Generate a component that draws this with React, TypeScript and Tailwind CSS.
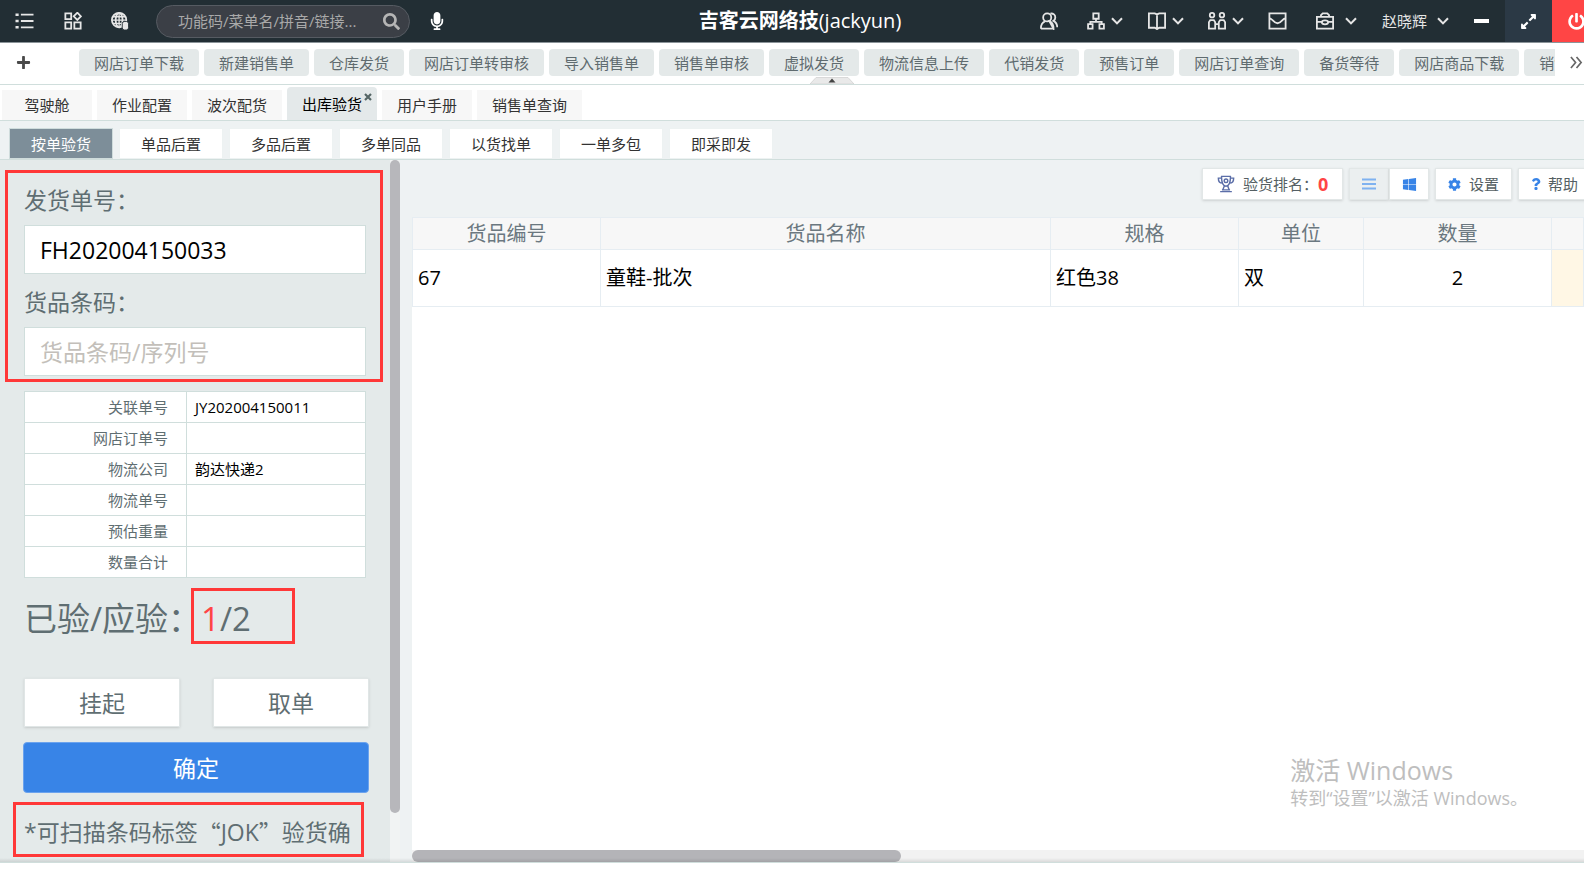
import type { ReactNode } from 'react'
import { FaSearch, FaMicrophone, FaWindows, FaCog, FaQuestion, FaPowerOff, FaPlus, FaExpandAlt } from 'react-icons/fa'

const SHORTCUTS = [
  '网店订单下载',
  '新建销售单',
  '仓库发货',
  '网店订单转审核',
  '导入销售单',
  '销售单审核',
  '虚拟发货',
  '物流信息上传',
  '代销发货',
  '预售订单',
  '网店订单查询',
  '备货等待',
  '网店商品下载',
  '销售单查询',
]

const PAGES = ['驾驶舱', '作业配置', '波次配货', '出库验货', '用户手册', '销售单查询']
const ACTIVE_PAGE = '出库验货'

const MODES = ['按单验货', '单品后置', '多品后置', '多单同品', '以货找单', '一单多包', '即采即发']
const ACTIVE_MODE = '按单验货'

const ORDER_INFO = [
  { label: '关联单号', value: 'JY202004150011' },
  { label: '网店订单号', value: '' },
  { label: '物流公司', value: '韵达快递2' },
  { label: '物流单号', value: '' },
  { label: '预估重量', value: '' },
  { label: '数量合计', value: '' },
]

function Icon({ children, className = 'w-[18px] h-[18px]' }: { children: ReactNode; className?: string }) {
  return (
    <svg
      viewBox="0 0 20 20"
      className={`${className} shrink-0`}
      fill="none"
      stroke="currentColor"
      strokeWidth="2"
      aria-hidden="true"
    >
      {children}
    </svg>
  )
}

function Chevron() {
  return (
    <svg viewBox="0 0 12 8" className="w-3 h-2 shrink-0" fill="none" stroke="currentColor" strokeWidth="2" aria-hidden="true">
      <path d="M1 1.200 6 6.400 11 1.200" />
    </svg>
  )
}

function Header() {
  return (
    <header className="-mr-4 h-[43px] shrink-0 grid grid-cols-[1fr_auto_1fr] items-center bg-[#222e34] border-b border-[#8b9499] text-[#e6e6e6]">
      <div className="flex items-center pl-[15px]">
        <button aria-label="菜单" className="mr-[30px]">
          <Icon className="w-[19px] h-[18px]">
            <path d="M0 3h3.500M0 10h3.500M0 17h3.500" strokeWidth="2.800" />
            <path d="M6 3h14M6 10h14M6 17h14" />
          </Icon>
        </button>
        <button aria-label="应用" className="mr-[29px]">
          <Icon>
            <path d="M1.500 1.500h6.500v6.500h-6.500zM1.500 11.500h6.500v7h-6.500zM11.500 11.500h7v7h-7z" />
            <path d="m14.800.800 4 4-4 4-4-4z" />
          </Icon>
        </button>
        <button aria-label="网络" className="mr-[27px]">
          <Icon>
            <circle cx="9" cy="9" r="8" />
            <ellipse cx="9" cy="9" rx="3.800" ry="8" />
            <path d="M9 1v16M1 9h16M2 5.300h14M2 12.700h10" strokeWidth="1.500" />
            <rect x="12.500" y="10.500" width="7" height="9.500" rx="2.500" fill="currentColor" stroke="#222e34" strokeWidth="1" />
          </Icon>
        </button>
        <div className="flex items-center w-[254px] h-[33px] pl-[21px] pr-[9px] rounded-full bg-[#3b3f46] border border-[#565b62]">
          <input
            type="text"
            aria-label="搜索"
            placeholder="功能码/菜单名/拼音/链接..."
            className="flex-1 min-w-0 bg-transparent outline-none text-[15px] leading-5 placeholder:text-[#a9a9a9]"
          />
          <FaSearch className="w-[17px] h-[17px] text-[#b5b5b5]" />
        </div>
        <button aria-label="语音" className="ml-[18px]">
          <FaMicrophone className="w-[18px] h-[18px] text-white" />
        </button>
      </div>

      <h1 className="text-[20px] leading-7 text-white">
        <span className="font-bold">吉客云网络技</span>(jackyun)
      </h1>

      <div className="flex items-center justify-end h-full">
        <button aria-label="联系人" className="mr-[29px]">
          <Icon>
            <circle cx="8" cy="6" r="4.500" />
            <path d="M1 18.500c0-4.500 2-7 4.500-8M10.500 10.500c3 1 4.500 3.500 4.500 8zM1 18.500h14" />
            <path d="M11.500 1.700c3.500-.4 5.500 1.600 5.500 4.300 0 1.700-.8 3-2 3.800 2.500 1.200 4 3.700 4.200 7.200" />
          </Icon>
        </button>
        <button aria-label="组织" className="flex items-center gap-[6px] mr-[25px]">
          <Icon>
            <path d="M7 1.500h6v6h-6zM1.200 13.500h5v5h-5zM13.800 13.500h5v5h-5zM10 7.500v3.500M3.700 13.500v-2.500h12.600v2.500" />
          </Icon>
          <Chevron />
        </button>
        <button aria-label="手册" className="flex items-center gap-[6px] mr-[24px]">
          <Icon>
            <path d="M1 1.500h6.500l2.500 1.200 2.500-1.200h6.500v16h-6.500l-2.500 1.500-2.500-1.500h-6.500zM10 2.700v16" />
          </Icon>
          <Chevron />
        </button>
        <button aria-label="查找" className="flex items-center gap-[6px] mr-[24px]">
          <Icon>
            <circle cx="4.500" cy="3.500" r="2.500" />
            <circle cx="15.500" cy="3.500" r="2.500" />
            <path d="M1 18.500v-7l1.500-2.500h4l1.500 2.500v7zM12 18.500v-7l1.500-2.500h4l1.500 2.500v7zM8 13.500h4" />
          </Icon>
          <Chevron />
        </button>
        <button aria-label="消息" className="mr-[29px]">
          <Icon className="w-[19px] h-[18px]">
            <path d="M1 1.500h18v17h-18zM1.500 7c2.500 0 4.500 5.500 8.500 5.500s6-5.500 8.500-5.500" />
          </Icon>
        </button>
        <button aria-label="工具" className="flex items-center gap-[11px] mr-[25px]">
          <Icon>
            <path d="M1 5.500h18v13h-18zM5.500 5.500v-2l2-2h5l2 2v2M1 11h6M13 11h6" />
            <ellipse cx="10" cy="11.500" rx="3.500" ry="2.200" />
          </Icon>
          <Chevron />
        </button>
        <button className="flex items-center gap-[10px] mr-[25px] text-[15px] leading-5">
          赵晓辉
          <Chevron />
        </button>
        <button aria-label="最小化" className="mr-[16px]">
          <span className="block w-[15px] h-1 bg-white" />
        </button>
        <button aria-label="全屏" className="flex items-center justify-center w-[47px] h-full bg-[#2b3945] text-white">
          <FaExpandAlt className="w-[17px] h-[17px]" />
        </button>
        <button aria-label="退出" className="flex items-center justify-center w-[48px] h-full bg-[#ff4545] text-white">
          <FaPowerOff className="w-[17px] h-[17px]" />
        </button>
      </div>
    </header>
  )
}

function ShortcutBar() {
  return (
    <nav className="relative flex items-center h-[42px] pb-[2px] shrink-0 bg-white border-b border-[#d0dedc]">
      <button aria-label="添加" className="w-[79px] pl-[16px] shrink-0 text-[#4a4a4a]">
        <FaPlus className="w-[15px] h-[15px]" />
      </button>
      <div className="flex-1 flex gap-[5px] min-w-0 overflow-hidden">
        {SHORTCUTS.map((name) => (
          <button
            key={name}
            className="shrink-0 h-[27px] px-[15px] rounded-sm bg-[#e4e9e9] text-[15px] leading-5 text-[#5f6b6f]"
          >
            {name}
          </button>
        ))}
      </div>
      <button aria-label="更多" className="w-[29px] pl-[15px] shrink-0 text-[#666]">
        <svg viewBox="0 0 14 14" className="w-[13px] h-[13px]" fill="none" stroke="currentColor" strokeWidth="1.800" aria-hidden="true">
          <path d="m1 1 5 6-5 6M7 1l5 6-5 6" />
        </svg>
      </button>
      <button aria-label="收起" className="absolute left-1/2 bottom-0 ml-[18px]">
        <svg viewBox="0 0 44 7" className="w-[44px] h-[7px]" aria-hidden="true">
          <path d="M0 7 6 .5h32L44 7z" fill="#e9e9e9" stroke="#d2d2d2" strokeWidth=".8" />
          <path d="m18.500 5.500 3.500-4 3.500 4z" fill="#444" />
        </svg>
      </button>
    </nav>
  )
}

function PageTabs() {
  return (
    <nav className="flex items-end gap-[5px] h-[36px] shrink-0 pl-[2px] bg-white border-b border-[#d0dedc] text-[15px] leading-5">
      {PAGES.map((name) =>
        name === ACTIVE_PAGE ? (
          <button key={name} className="relative h-[33px] min-w-[90px] px-[15px] rounded-t-sm bg-[#e4e9ea] text-black">
            {name}
            <svg viewBox="0 0 8 8" className="absolute right-[5px] top-[6px] w-[8px] h-[8px]" stroke="#566" strokeWidth="2.200" aria-hidden="true">
              <path d="m1 1 6 6M7 1 1 7" />
            </svg>
          </button>
        ) : (
          <button key={name} className="h-[30px] min-w-[90px] px-[15px] bg-[#f7f7f7] text-[#333]">
            {name}
          </button>
        ),
      )}
    </nav>
  )
}

function ModeTabs() {
  return (
    <nav className="flex items-end gap-[6px] h-[39px] shrink-0 pl-[9px] bg-[#eef2f3] border-b border-[#d0dedc] text-[15px] leading-5">
      {MODES.map((name) => (
        <button
          key={name}
          className={
            name === ACTIVE_MODE
              ? 'w-[104px] h-[31px] bg-[#7d8e99] border border-[#cfdcdc] text-white'
              : 'w-[104px] h-[31px] bg-white border border-[#edf2f2] text-[#333]'
          }
        >
          {name}
        </button>
      ))}
    </nav>
  )
}

function ScanPanel() {
  return (
    <aside className="flex w-[400px] shrink-0 bg-[#e4eaea] text-[#5f6e72]">
      <div className="w-[390px] overflow-hidden">
        <div className="mt-[10px] ml-[5px] w-[378px] border-3 border-[#ff3838] pl-[16px] pt-[11px] pb-[3px]">
          <label className="block mb-[12px] text-[23px] leading-8">
            发货单号：
            <input
              type="text"
              defaultValue="FH202004150033"
              className="block mt-[9px] w-[342px] h-[49px] px-[15px] bg-white border border-[#d0dedc] text-black outline-none"
            />
          </label>
          <label className="block text-[23px] leading-8">
            货品条码：
            <input
              type="text"
              placeholder="货品条码/序列号"
              className="block mt-[9px] w-[342px] h-[49px] px-[15px] bg-white border border-[#d0dedc] text-black outline-none placeholder:text-[#c3bfba]"
            />
          </label>
        </div>

        <table className="mt-[9px] ml-[24px] w-[342px] table-fixed border-collapse bg-white text-[15px] leading-5">
          <tbody>
            {ORDER_INFO.map((row) => (
              <tr key={row.label} className="h-[31px]">
                <th className="w-[162px] pr-[18px] border border-[#d0dedc] font-normal text-right">{row.label}</th>
                <td className="pl-[8px] border border-[#d0dedc] text-black">{row.value}</td>
              </tr>
            ))}
          </tbody>
        </table>

        <div className="flex items-center mt-[10px] ml-[24px] h-[56px] text-[33px] leading-[48px]">
          <span className="w-[167px] pt-[6px] shrink-0 whitespace-nowrap">已验/应验：</span>
          <span className="flex items-center w-[104px] h-[56px] pl-[7px] pt-[6px] border-3 border-[#ff3838]">
            <span className="text-[#ff4545]">1</span>/2
          </span>
        </div>

        <div className="flex justify-between mt-[34px] ml-[24px] w-[345px] text-[23px] leading-8">
          <button className="w-[156px] h-[49px] bg-white border border-[#e0e6e6] shadow-sm">挂起</button>
          <button className="w-[156px] h-[49px] bg-white border border-[#e0e6e6] shadow-sm">取单</button>
        </div>
        <button className="block mt-[15px] ml-[23px] w-[346px] h-[51px] rounded-sm bg-[#3884e7] border border-[#6ba3ee] text-[23px] leading-8 text-white">
          确定
        </button>

        <p className="flex items-center mt-[9px] ml-[13px] w-[351px] h-[55px] pl-[8px] pt-[4px] border-3 border-[#ff3838] text-[23px] leading-8 whitespace-nowrap">
          *可扫描条码标签
          <span className="font-['Noto_Sans_CJK_SC',sans-serif]">“</span>
          JOK
          <span className="font-['Noto_Sans_CJK_SC',sans-serif]">”</span>
          验货确
        </p>
      </div>
      <div className="w-[10px] bg-[#f1f3f3]">
        <div className="h-[93%] rounded-full bg-[#b7b7bb]" />
      </div>
    </aside>
  )
}

function Toolbar() {
  const button = 'flex items-center h-[32px] bg-white border border-[#e2e7e7] shadow-sm text-[15px] leading-5'
  return (
    <div className="flex justify-end -mr-[11px] pt-[8px] text-[#555f63]">
      <button className={`${button} mr-[6px] w-[141px] pl-[14px]`}>
        <Icon className="w-[18px] h-[18px] mr-[8px] text-[#5b6ea8]">
          <path d="M4.500 1.500h11M5 1.500c0 7 1.500 11 5 11s5-4 5-11M4.500 3.500h-3c0 3.500 1.500 5.500 4.500 5.500M15.500 3.500h3c0 3.500-1.500 5.500-4.500 5.500M8 12.500l-1.500 4M12 12.500l1.500 4M3.500 18.500h13M5.500 16.500h9" strokeWidth="1.600" />
          <circle cx="10" cy="6.500" r="2" strokeWidth="1.600" />
        </Icon>
        验货排名：
        <b className="text-[18px] text-[#ff4545]">0</b>
      </button>
      <button aria-label="列表" className="flex items-center justify-center w-[40px] h-[32px] border border-[#e2e7e7] bg-[#ebeff0] shadow-sm text-[#7fb2f0]">
        <svg viewBox="0 0 14 12" className="w-[14px] h-[12px]" stroke="currentColor" strokeWidth="1.800" aria-hidden="true">
          <path d="M0 1.500h14M0 6h14M0 10.500h14" />
        </svg>
      </button>
      <button aria-label="平铺" className={`${button} justify-center mr-[6px] w-[40px] text-[#3884e7]`}>
        <FaWindows className="w-[15px] h-[15px]" />
      </button>
      <button className={`${button} mr-[6px] w-[77px] gap-[8px] pl-[12px]`}>
        <FaCog className="w-[13px] h-[13px] text-[#3884e7]" />
        设置
      </button>
      <button className={`${button} w-[77px] gap-[7px] pl-[12px]`}>
        <FaQuestion className="w-[10px] h-[12px] text-[#3884e7]" />
        帮助
      </button>
    </div>
  )
}

function GoodsTable() {
  const head = 'border border-[#e6edf2] font-normal'
  const cell = 'border border-[#e6edf2] px-[5px]'
  return (
    <table className="w-full table-fixed border-collapse text-[20px] leading-7">
      <colgroup>
        <col className="w-[188px]" />
        <col className="w-[450px]" />
        <col className="w-[188px]" />
        <col className="w-[125px]" />
        <col className="w-[188px]" />
        <col />
      </colgroup>
      <thead>
        <tr className="h-[32px] bg-[#f7f7f7] text-[#6b7880]">
          <th className={head}>货品编号</th>
          <th className={head}>货品名称</th>
          <th className={head}>规格</th>
          <th className={head}>单位</th>
          <th className={head}>数量</th>
          <th className={head} />
        </tr>
      </thead>
      <tbody>
        <tr className="h-[57px] text-black">
          <td className={cell}>67</td>
          <td className={cell}>童鞋-批次</td>
          <td className={cell}>红色38</td>
          <td className={cell}>双</td>
          <td className={`${cell} text-center`}>2</td>
          <td className={`${cell} bg-[#fff7e5]`} />
        </tr>
      </tbody>
    </table>
  )
}

export default function App() {
  return (
    <div className="flex flex-col h-screen pb-[8px] overflow-hidden bg-white font-['Open_Sans','Noto_Sans_CJK_SC',sans-serif]">
      <Header />
      <ShortcutBar />
      <PageTabs />
      <ModeTabs />
      <div className="relative flex flex-1 min-h-0 border-b border-[#d0dedc] bg-[#eef2f3]">
        <ScanPanel />
        <main className="flex-1 flex flex-col min-w-0 overflow-hidden pl-[12px]">
          <Toolbar />
          <div className="relative flex-1 flex flex-col mt-[17px] bg-white">
            <div className="flex-1">
              <GoodsTable />
            </div>
            <div className="h-[12px] bg-[#f2f2f2]">
              <div className="w-[489px] h-[12px] rounded-full bg-[#b4b4b8]" />
            </div>
            {/* 系统水印 */}
            <div className="absolute right-[56px] bottom-[52px] text-[#bebebe]">
              <p className="text-[25px] leading-8">激活 Windows</p>
              <p className="text-[18px] leading-6">转到“设置”以激活 Windows。</p>
            </div>
          </div>
        </main>
        <div className="absolute inset-x-0 bottom-0 h-1 bg-linear-to-b from-transparent to-black/10" />
      </div>
    </div>
  )
}
